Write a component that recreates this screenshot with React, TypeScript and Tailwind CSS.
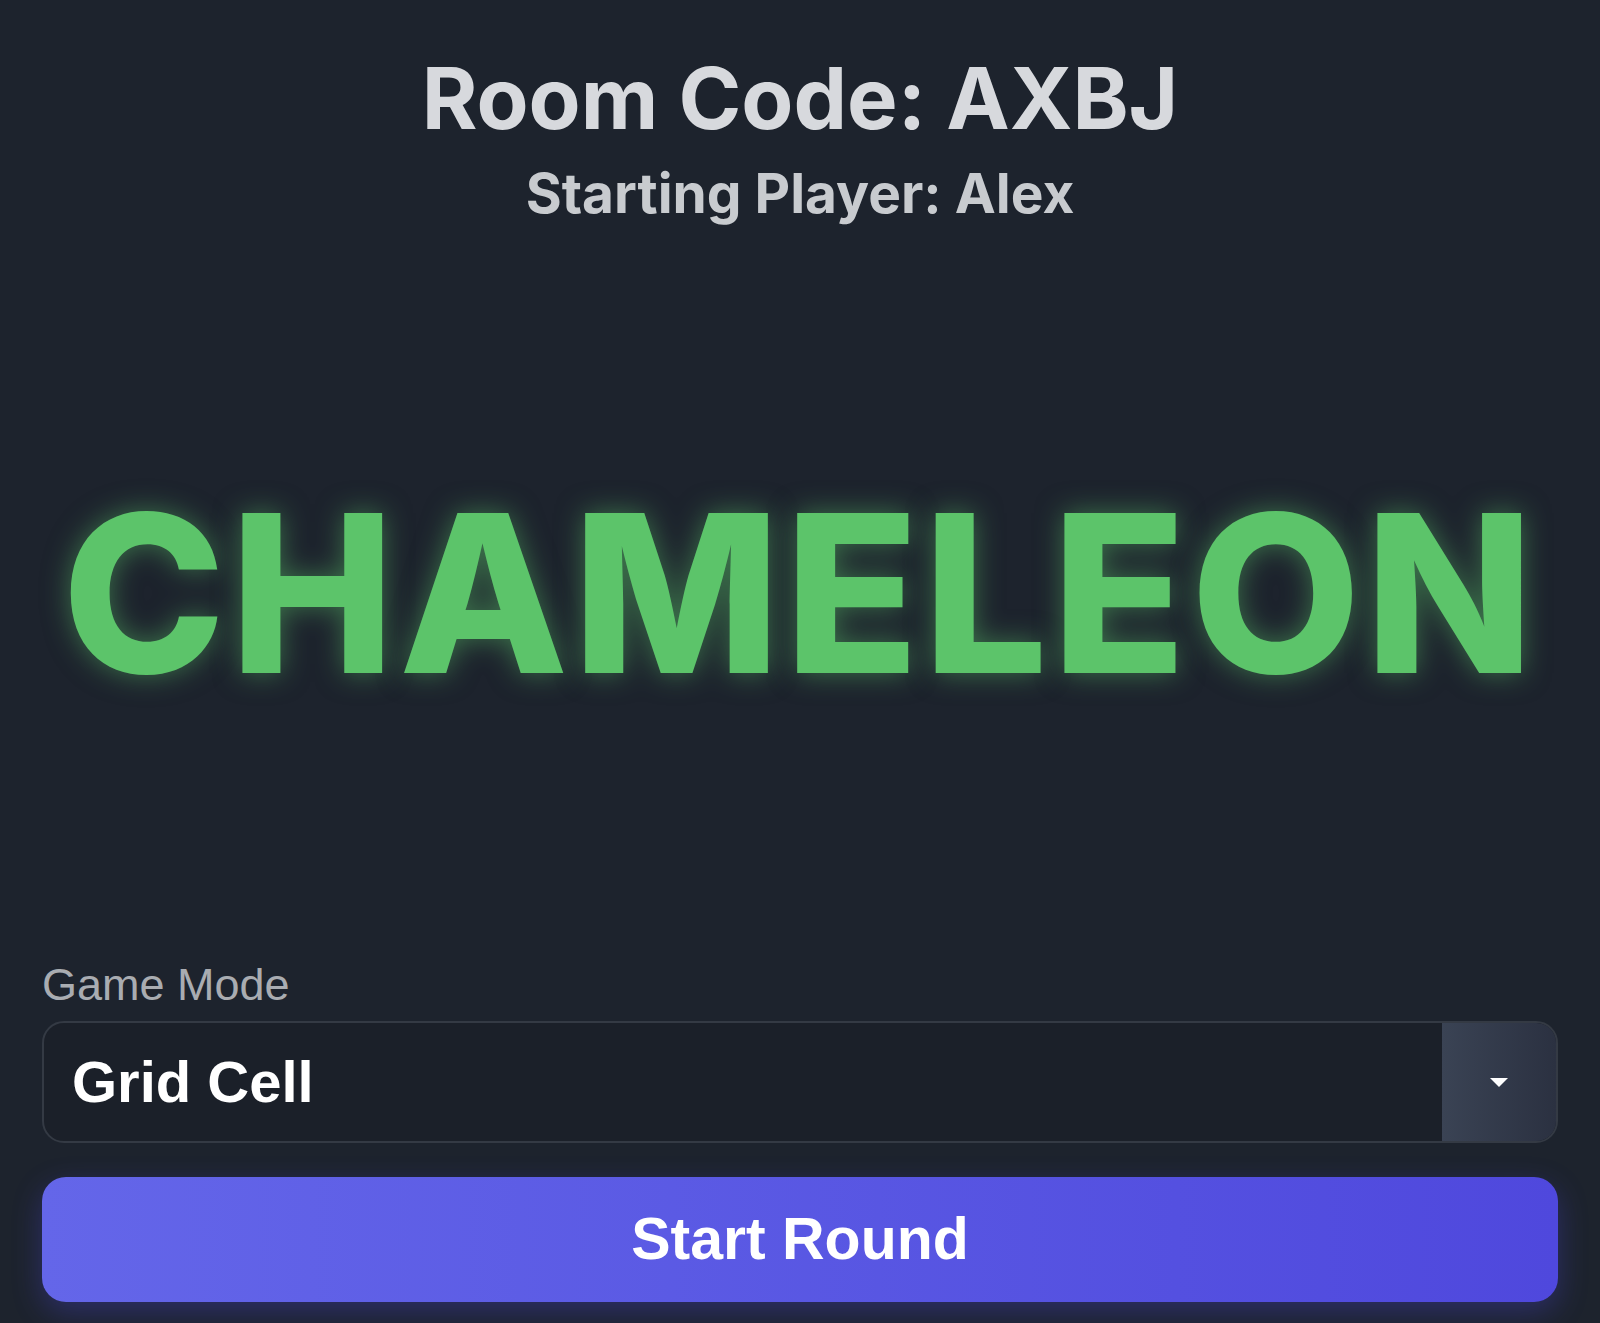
import React from "react";

export default function App() {
  return (
    <div className="min-h-[1323px] w-full bg-[#1d232d] px-[42px] flex flex-col">
      <h1 className="mt-[56px] text-center font-[Inter,'Liberation_Sans',sans-serif] text-[85px] leading-none font-bold text-[#d7d9dd]">
        Room Code: AXBJ
      </h1>
      <h2 className="mt-[25px] text-center font-[Inter,'Liberation_Sans',sans-serif] text-[55px] leading-none font-bold text-[#c8cbcf]">
        Starting Player: Alex
      </h2>
      <div className="mt-[262px] text-center font-[Inter,'Liberation_Sans',sans-serif] text-[220px] leading-none font-extrabold tracking-[0.02em] text-[#5cc46a] [text-shadow:0_0_28px_rgba(92,196,106,0.5)]">
        CHAMELEON
      </div>
      <label className="mt-[259px] block font-['Liberation_Sans',Arial,sans-serif] text-[45px] leading-none font-normal text-[#a9acb1]">
        Game Mode
      </label>
      <div className="mt-[14px] flex h-[122px] rounded-[22px] border-2 border-[#343a44] bg-[#1b2029] overflow-hidden">
        <div className="flex-1 flex items-center pl-[28px] font-['Liberation_Sans',Arial,sans-serif] text-[58px] font-bold text-white leading-none">
          Grid Cell
        </div>
        <div className="w-[114px] flex items-center justify-center bg-gradient-to-r from-[#3a4354] to-[#2b3141]">
          <svg width="18" height="9" viewBox="0 0 18 9">
            <path d="M0 0 L18 0 L9 9 Z" fill="#ffffff" />
          </svg>
        </div>
      </div>
      <button className="mt-[34px] h-[125px] w-full rounded-[24px] bg-gradient-to-r from-[#6466e9] to-[#4f48dd] font-['Liberation_Sans',Arial,sans-serif] text-[59px] font-bold leading-none text-white shadow-[0_10px_30px_rgba(79,70,229,0.32)]">
        Start Round
      </button>
    </div>
  );
}
